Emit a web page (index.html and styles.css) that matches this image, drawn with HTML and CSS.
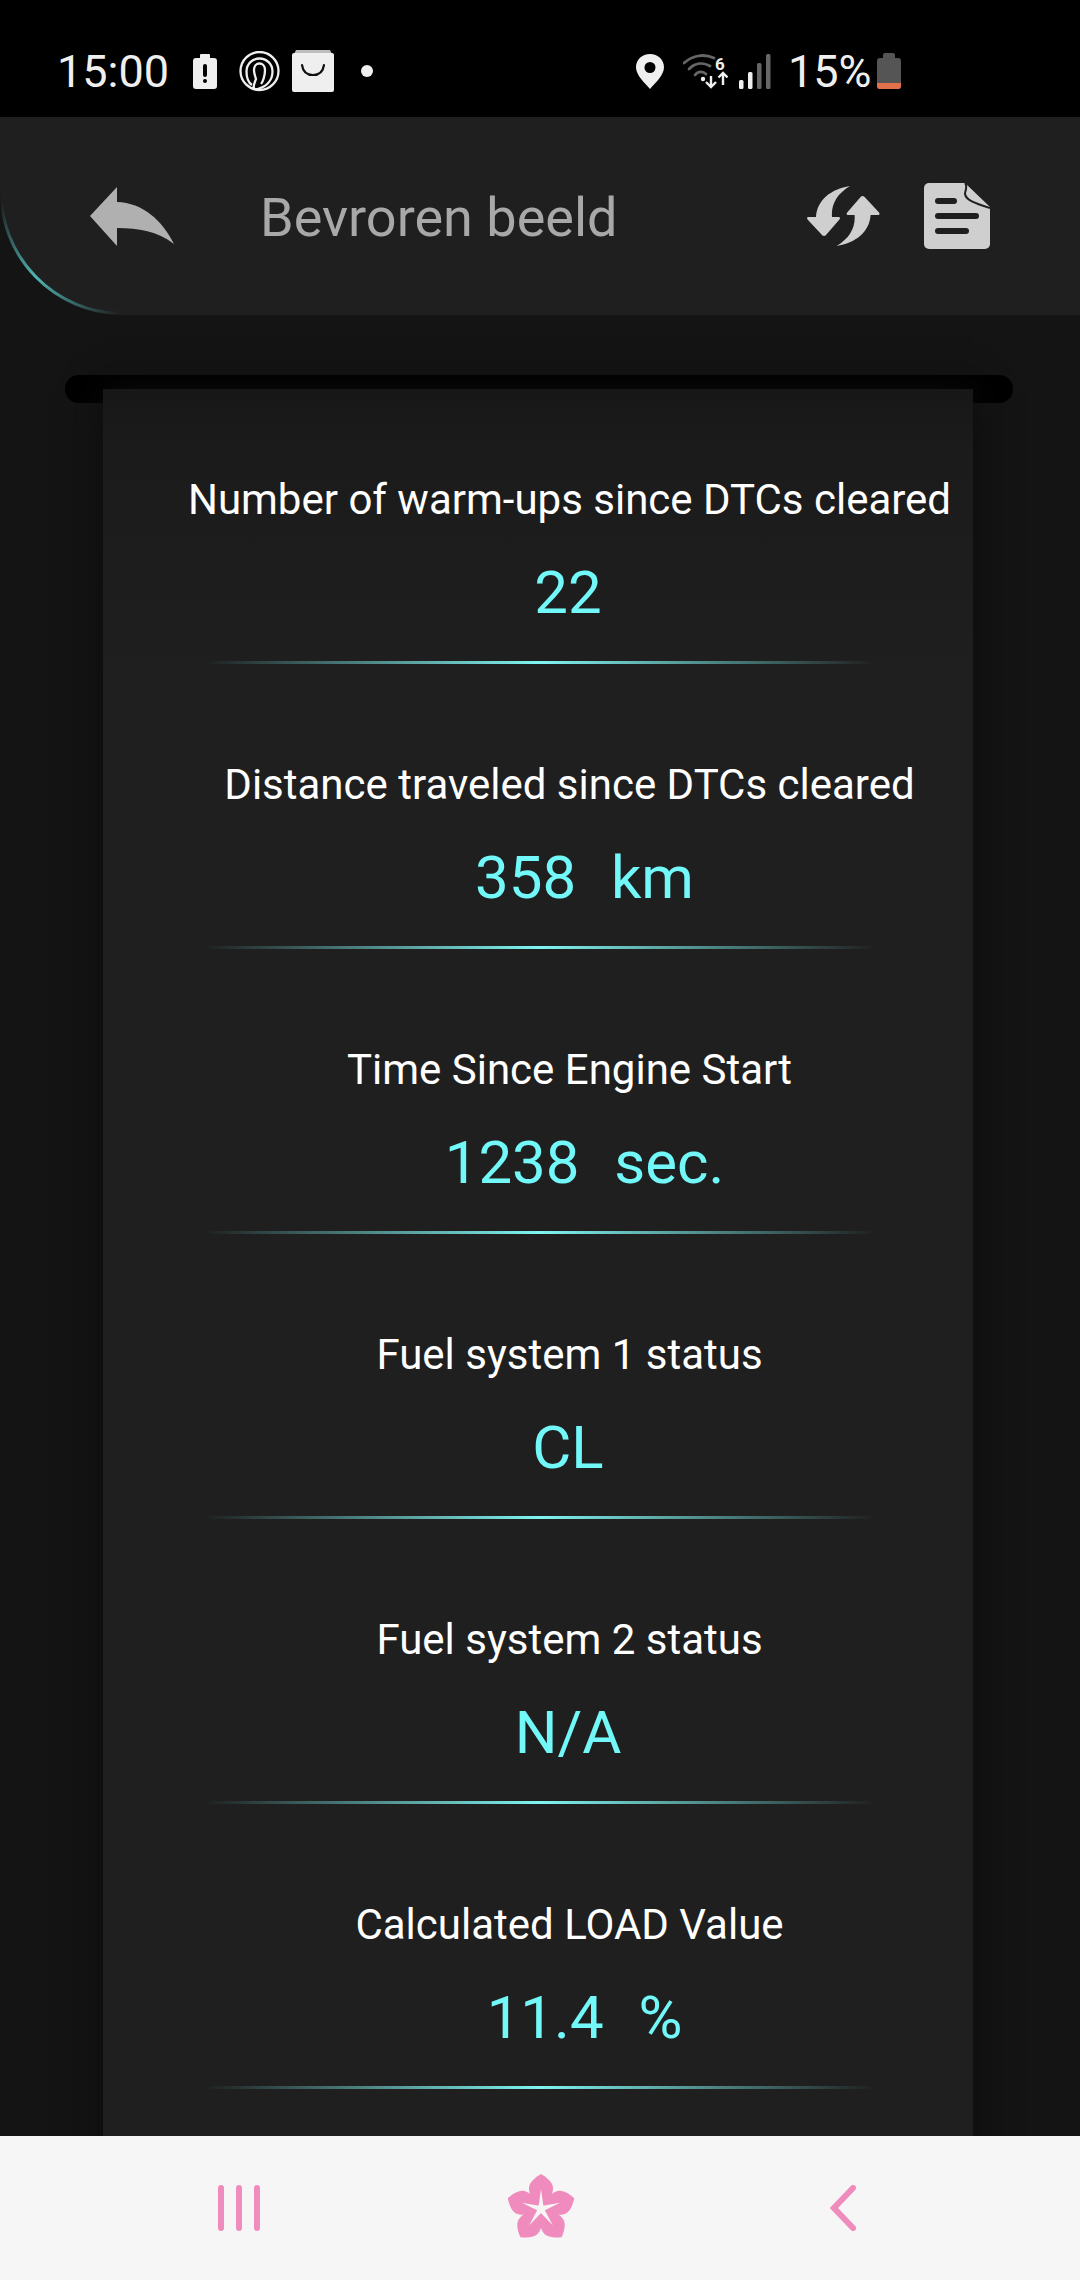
FILE: index.html
```html
<!DOCTYPE html>
<html>
   <head>
      <meta charset="UTF-8">
      <title>Bevroren beeld</title>
      <link rel="stylesheet" href="styles.css">
   </head>
   <body>
      <div class="page">
         <div class="status-bar">
            <span class="status-time">15:00</span>
            <svg class="icon-alert" width="24" height="35" viewBox="0 0 24 35">
               <path d="M8 0h8a1 1 0 0 1 1 1v3h4a3 3 0 0 1 3 3v25a3 3 0 0 1-3 3H3a3 3 0 0 1-3-3V7a3 3 0 0 1 3-3h4V1a1 1 0 0 1 1-1z" fill="#efefef"/>
               <rect x="10" y="10" width="4" height="13" rx="2" fill="#000"/>
               <circle cx="12" cy="27" r="2" fill="#000"/>
            </svg>
            <svg class="icon-spiral" width="41" height="41" viewBox="0 0 41 41">
               <g fill="none" stroke="#efefef" stroke-width="2.300">
                  <circle cx="20.500" cy="20" r="19"/>
                  <path d="M13 34C8.500 31 7.500 25 7.500 20.500 7.500 13 13.500 7.500 20.500 7.500S33.500 13 33.500 20.500C33.500 29 28 35 20 37.500 17 38.500 14 38 13 36"/>
                  <path d="M15 38c-1-4 1-7 2-10-1-3-2-6-2-9 0-4 2.500-6.500 5.500-6.500s5.500 2.500 5.500 6.500c0 5-2 12-4 14"/>
               </g>
            </svg>
            <svg class="icon-bag" width="42" height="42" viewBox="0 0 42 42">
               <path d="M4 0h34l2 4H2z" fill="#bdbdbd"/>
               <rect y="3" width="42" height="39" rx="2" fill="#efefef"/>
               <path d="M10 15c1 7 5 10 11 10s10-3 11-10" fill="none" stroke="#111" stroke-width="2.200" stroke-linecap="round"/>
            </svg>
            <span class="status-dot"></span>
            <div class="status-right">
               <svg width="28" height="35" viewBox="0 0 28 35">
                  <path d="M14 0C6 0 0 5.800 0 13.300 0 21 8.500 29 14 35 19.500 29 28 21 28 13.300 28 5.800 22 0 14 0z" fill="#efefef"/>
                  <circle cx="14" cy="13.500" r="5.500" fill="#000"/>
               </svg>
               <svg class="icon-wifi" width="45" height="36" viewBox="0 0 45 36">
                  <g fill="none" stroke="#666" stroke-width="2.800" stroke-linecap="round">
                     <path d="M1 10C9 3 20 0 31 5"/>
                     <path d="M6 16c6-6 14-7 21-3"/>
                     <path d="M12 22c3-4 8-4 11-1"/>
                  </g>
                  <circle cx="20" cy="26" r="2.200" fill="#efefef"/>
                  <text x="37" y="17" class="wifi-six" text-anchor="middle">6</text>
                  <path d="M28 23v11m-5-5 5 5 5-5" fill="none" stroke="#efefef" stroke-width="2.400"/>
                  <path d="M40 32V20m-4.500 4.500L40 20l4.500 4.500" fill="none" stroke="#efefef" stroke-width="2.400"/>
               </svg>
               <svg class="icon-signal" width="32" height="35" viewBox="0 0 32 35">
                  <rect y="26" width="4.500" height="9" rx="1.500" fill="#efefef"/>
                  <rect x="9" y="18" width="4.500" height="17" rx="1.500" fill="#efefef"/>
                  <rect x="18" y="9" width="4.500" height="26" rx="1.500" fill="#666"/>
                  <rect x="27" y="0" width="4.500" height="35" rx="1.500" fill="#666"/>
               </svg>
               <span class="status-percent">15%</span>
               <svg class="icon-battery" width="24" height="36" viewBox="0 0 24 36">
                  <path d="M8 0h8a2 2 0 0 1 2 2v3h3a3 3 0 0 1 3 3v25a3 3 0 0 1-3 3H3a3 3 0 0 1-3-3V8a3 3 0 0 1 3-3h3V2a2 2 0 0 1 2-2z" fill="#555"/>
                  <path d="M0 30h24v3a3 3 0 0 1-3 3H3a3 3 0 0 1-3-3z" fill="#e2704a"/>
               </svg>
            </div>
         </div>

         <div class="toolbar">
            <svg class="toolbar-arc" width="122" height="126" viewBox="0 0 122 126">
               <defs>
                  <linearGradient id="arcfade" x1="0" y1="0" x2="1" y2="1">
                     <stop offset="0.05" stop-color="#4fb8b4" stop-opacity="0"/>
                     <stop offset="0.5" stop-color="#4fb8b4"/>
                     <stop offset="1" stop-color="#4fb8b4" stop-opacity="0"/>
                  </linearGradient>
               </defs>
               <path d="M1 2A122 122 0 0 0 120 124.500" fill="none" stroke="url(#arcfade)" stroke-width="3"/>
            </svg>
            <svg class="back-icon" width="84" height="59" viewBox="0 0 84 59">
               <path d="M0 29 27 0v15c26 1 45 18 57 42-17-13-35-16-57-16v18z" fill="#b0b0b0"/>
            </svg>
            <span class="toolbar-title">Bevroren beeld</span>
            <svg class="refresh-icon" width="73" height="60" viewBox="0 0 73 60">
               <g fill="#cfcfcf">
                  <path id="refresh-half" d="M43 0C24 3 10 14 9 31H1q-2 1 0 3l14 15q2 2 4 0l13-15q2-2 0-3h-7C24 18 30 8 43 0z"/>
                  <use href="#refresh-half" transform="rotate(180 36.300 30)"/>
               </g>
            </svg>
            <svg class="doc-icon" width="66" height="66" viewBox="0 0 66 66">
               <path d="M5 0h36l25 24v37a5 5 0 0 1-5 5H5a5 5 0 0 1-5-5V5a5 5 0 0 1 5-5z" fill="#cfcfcf"/>
               <path d="M41 0c3 3 0 8 0 11 1 6 9 9 25 14" fill="none" stroke="#1f1f1f" stroke-width="2"/>
               <g stroke="#1f1f1f" stroke-width="6" stroke-linecap="round">
                  <path d="M14 18h16"/>
                  <path d="M14 33h38"/>
                  <path d="M14 48h28"/>
               </g>
            </svg>
         </div>

         <div class="content">
            <div class="roller"></div>
            <div class="panel">
               <div class="row">
                  <div class="row-label">Number of warm-ups since DTCs cleared</div>
                  <div class="row-value">22</div>
                  <div class="row-line"></div>
               </div>
               <div class="row">
                  <div class="row-label">Distance traveled since DTCs cleared</div>
                  <div class="row-value has-unit">358  km</div>
                  <div class="row-line"></div>
               </div>
               <div class="row">
                  <div class="row-label">Time Since Engine Start</div>
                  <div class="row-value has-unit">1238  sec.</div>
                  <div class="row-line"></div>
               </div>
               <div class="row">
                  <div class="row-label">Fuel system 1 status</div>
                  <div class="row-value">CL</div>
                  <div class="row-line"></div>
               </div>
               <div class="row">
                  <div class="row-label">Fuel system 2 status</div>
                  <div class="row-value">N/A</div>
                  <div class="row-line"></div>
               </div>
               <div class="row">
                  <div class="row-label">Calculated LOAD Value</div>
                  <div class="row-value has-unit">11.4  %</div>
                  <div class="row-line"></div>
               </div>
            </div>
         </div>

         <div class="nav-bar">
            <svg width="42" height="46" viewBox="0 0 42 46">
               <g stroke="#f08bbd" stroke-width="6" stroke-linecap="round">
                  <path d="M3 3v40"/>
                  <path d="M21 3v40"/>
                  <path d="M39 3v40"/>
               </g>
            </svg>
            <svg class="flower" width="72" height="72" viewBox="-36 -36 72 72">
               <g fill="#f08bbd">
                  <circle r="8"/>
                  <path id="petal" d="M0 0C-7-6-12-13-12-21-12-27-5-32 0-35 5-32 12-27 12-21 12-13 7-6 0 0z"/>
                  <use href="#petal" transform="rotate(72)"/>
                  <use href="#petal" transform="rotate(144)"/>
                  <use href="#petal" transform="rotate(216)"/>
                  <use href="#petal" transform="rotate(288)"/>
               </g>
               <g fill="#f6f6f6">
                  <circle r="4"/>
                  <path id="ray" d="M-2.800 0 0-20 2.800 0z"/>
                  <use href="#ray" transform="rotate(72)"/>
                  <use href="#ray" transform="rotate(144)"/>
                  <use href="#ray" transform="rotate(216)"/>
                  <use href="#ray" transform="rotate(288)"/>
               </g>
            </svg>
            <svg width="26" height="46" viewBox="0 0 26 46">
               <path d="M23 3 4 23l19 20" fill="none" stroke="#f08bbd" stroke-width="6" stroke-linecap="round"/>
            </svg>
         </div>
      </div>
   </body>
</html>
```

FILE: styles.css
```css
body {
   margin: 0;
   background-color: black;
   font-family: Roboto, sans-serif;
}
.page {
   display: flex;
   flex-direction: column;
   width: 1080px;
   height: 2280px;
   overflow: hidden;
   background-color: #141414;
}

/* status bar */
.status-bar {
   display: flex;
   align-items: center;
   flex-shrink: 0;
   box-sizing: border-box;
   height: 117px;
   padding: 25px 179px 0 57px;
   background-color: black;
}
.status-time {
   width: 111px;
   font-size: 45px;
   color: #efefef;
}
.icon-alert {
   margin-left: 25px;
}
.icon-spiral {
   margin-left: 22px;
}
.icon-bag {
   margin-left: 12px;
}
.status-dot {
   width: 12px;
   height: 12px;
   margin-left: 27px;
   border-radius: 50%;
   background-color: #efefef;
}
.status-right {
   display: flex;
   align-items: center;
   margin-left: auto;
}
.icon-wifi {
   margin-left: 19px;
}
.wifi-six {
   font-family: Roboto, sans-serif;
   font-size: 17px;
   font-weight: 700;
   fill: #efefef;
}
.icon-signal {
   margin-left: 11px;
}
.status-percent {
   width: 81px;
   margin-left: 17px;
   font-size: 45px;
   color: #efefef;
}
.icon-battery {
   margin-left: 8px;
}

/* toolbar */
.toolbar {
   position: relative;
   display: flex;
   align-items: center;
   flex-shrink: 0;
   box-sizing: border-box;
   height: 198px;
   padding: 0 90px 0 90px;
   background-color: #1f1f1f;
   border-bottom-left-radius: 122px;
}
.toolbar-arc {
   position: absolute;
   left: 0;
   bottom: 0;
}
.toolbar-title {
   margin-left: 86px;
   margin-top: 2px;
   font-size: 54px;
   color: #a8a8a8;
}
.refresh-icon {
   margin-left: auto;
}
.doc-icon {
   margin-left: 44px;
}

/* scroll of values */
.content {
   flex: 1;
   min-height: 0;
   padding-top: 60px;
   overflow: hidden;
}
.roller {
   width: 948px;
   height: 28px;
   margin-left: 65px;
   margin-bottom: -14px;
   border-radius: 14px;
   background-color: black;
}
.panel {
   position: relative;
   width: 870px;
   height: 1800px;
   margin-left: 103px;
   background: linear-gradient(#171717, #1b1b1b 60px, #1f1f1f 300px);
   box-shadow: 0 0 36px #0c0c0c;
}
.row {
   box-sizing: border-box;
   height: 285px;
   padding-top: 86px;
}
.row-label {
   padding-left: 63px;
   font-size: 42px;
   line-height: 50px;
   text-align: center;
   color: white;
}
.row-value {
   margin-top: 33px;
   padding-left: 60px;
   font-size: 60px;
   line-height: 70px;
   text-align: center;
   white-space: pre;
   word-spacing: 2.500px;
   color: #72f8f8;
}
.row-value.has-unit {
   padding-left: 93px;
}
.row-line {
   width: 672px;
   height: 3px;
   margin-top: 33px;
   margin-left: 101px;
   background: linear-gradient(to right, transparent, #7ff5f2 50%, transparent);
}

/* bottom navigation */
.nav-bar {
   display: grid;
   grid-template-columns: 302px 302px 302px;
   justify-items: center;
   align-items: center;
   flex-shrink: 0;
   height: 144px;
   padding-left: 88px;
   background-color: #f6f6f6;
}
.flower {
   margin-top: 2px;
}
```
